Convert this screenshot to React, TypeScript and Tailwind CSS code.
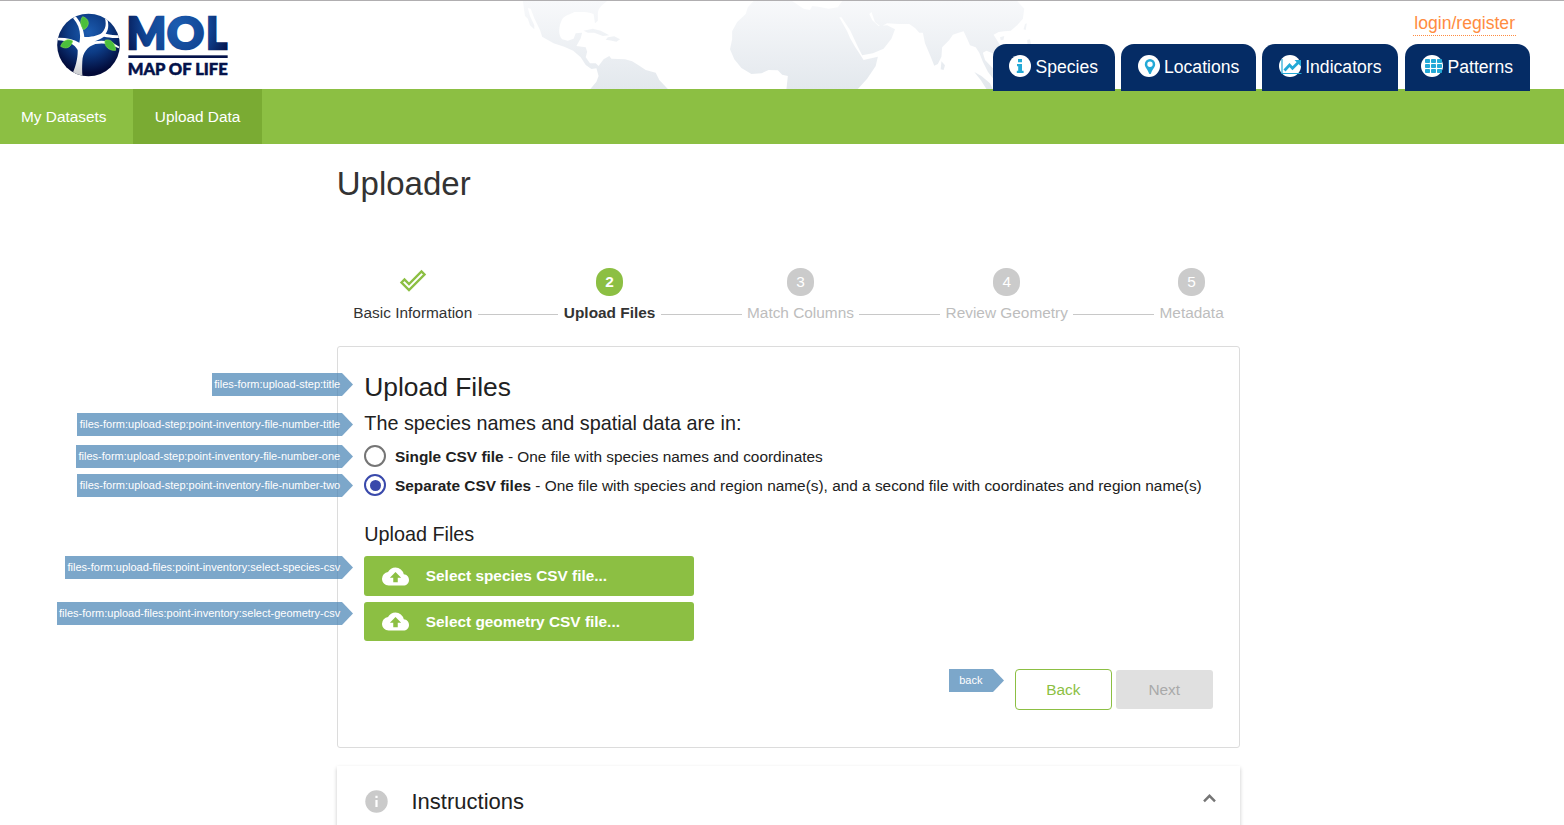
import React from "react";

const ARIAL = "font-['Liberation_Sans',Arial,sans-serif]";

function Logo() {
  return (
    <svg className="block h-[90px] w-[210px]" viewBox="0 0 630 270">
      <defs>
        <radialGradient id="globe" cx="0.5" cy="0.3" r="0.65">
          <stop offset="0" stopColor="#1c5cb0" />
          <stop offset="0.5" stopColor="#0d3c86" />
          <stop offset="1" stopColor="#020a38" />
        </radialGradient>
        <radialGradient id="word" gradientUnits="userSpaceOnUse" cx="410" cy="75" r="170">
          <stop offset="0" stopColor="#1c5cb0" />
          <stop offset="0.6" stopColor="#104391" />
          <stop offset="1" stopColor="#04124a" />
        </radialGradient>
        <linearGradient id="trunk" x1="0" y1="0" x2="0" y2="1">
          <stop offset="0.6" stopColor="#fff" />
          <stop offset="1" stopColor="#c4c6ca" />
        </linearGradient>
        <clipPath id="disc">
          <circle cx="145.500" cy="135" r="94" />
        </clipPath>
      </defs>
      <circle cx="145.500" cy="135" r="94" fill="url(#globe)" />
      <g clipPath="url(#disc)">
        <path
          d="M93 232C108 200 114 172 113 150C104 133 80 120 50 121L50 113C78 112 100 117 118 128C124 100 118 76 99 54L107 49C122 66 130 86 133 111C150 111 174 108 186 98C199 86 199 68 194 52L201 54C207 74 206 90 197 101C211 104 225 106 240 106L240 113C222 116 206 112 192 110C180 118 170 121 163 124C184 120 204 122 218 128L238 140L236 145C212 131 190 128 166 132C142 140 128 158 127 184C126 204 126 218 128 232Z"
          fill="url(#trunk)"
        />
      </g>
      <g fill="#4bbf3c" stroke="#7fdc45" strokeWidth="2">
        <path d="M128 50C149 56 151 78 131 89C120 76 120 60 128 50Z" />
        <path d="M62 139C68 120 86 115 98 123C93 143 78 149 62 139Z" />
        <path d="M195 121C212 115 226 130 227 151C208 153 192 140 195 121Z" />
      </g>
      <text
        y="146"
        fontSize="130"
        fontWeight="900"
        fill="url(#word)"
        stroke="url(#word)"
        strokeWidth="8"
        className="font-['Lato',sans-serif]"
      >
        <tspan x="260" textLength="118" lengthAdjust="spacingAndGlyphs">M</tspan>
        <tspan x="381" textLength="111" lengthAdjust="spacingAndGlyphs">O</tspan>
        <tspan x="499" textLength="62" lengthAdjust="spacingAndGlyphs">L</tspan>
      </text>
      <rect x="265" y="166" width="298" height="8" fill="#04124a" />
      <text
        x="263"
        y="224"
        textLength="300"
        lengthAdjust="spacingAndGlyphs"
        fontSize="48"
        fontWeight="900"
        fill="#04124a"
        stroke="#04124a"
        strokeWidth="1.500"
        className="font-['Lato',sans-serif]"
      >
        MAP OF LIFE
      </text>
    </svg>
  );
}

function WorldMap() {
  return (
    <svg
      className="absolute left-[500px] top-0 h-[88px] w-[560px]"
      viewBox="0 3 1568 264"
      preserveAspectRatio="none"
    >
      <defs>
        <linearGradient id="land" gradientUnits="userSpaceOnUse" x1="0" y1="0" x2="0" y2="267">
          <stop offset="0" stopColor="#f8f9fb" />
          <stop offset="1" stopColor="#e3e8ed" />
        </linearGradient>
      </defs>
      <g fill="url(#land)">
        <path d="M64 3L300 3C285 15 275 25 274 40L274 62L266 70L262 42C245 34 225 36 208 36C195 45 180 46 174 58C164 80 162 105 174 118L190 122L206 116L212 100L230 98L226 115L214 138L240 142L244 155L240 172L252 190L268 190L276 198L290 178L306 168L312 176L330 177L350 178L370 184L388 196L408 210L436 218L446 240L470 267L253 267L270 245L276 228L270 205L256 207L240 195L226 172L205 152L180 140L150 130L118 110L112 90L96 55L86 26L78 24L84 48L96 76L96 88L84 76L78 56L70 48Z" />
        <path d="M234 92L260 86L282 92L306 106L288 108L264 98L246 98Z" />
        <path d="M302 112L320 109L336 118L326 125L306 121L296 119Z" />
        <path d="M710 3L818 3L850 26L868 30L874 18L892 20L920 26L946 22L958 3L1448 3L1468 26L1464 56L1448 76L1430 92L1412 94L1396 96L1382 104L1390 118L1400 135L1398 158L1380 160L1362 152L1352 158L1358 180L1380 205L1380 235L1366 215L1352 185L1342 158L1332 142L1316 136L1308 116L1298 94L1284 98L1268 104L1258 120L1238 142L1236 170L1226 192L1216 197L1206 170L1190 130L1184 98L1174 98L1162 84L1146 72L1116 72L1084 70L1066 80L1050 66L1040 36L1034 42L1042 60L1060 78L1084 76L1106 88L1096 116L1074 146L1044 160L1014 166L1002 140L980 90L956 52L950 52L972 94L980 114L994 140L1006 160L1018 180L1058 170L1052 198L1028 236L1002 267L802 267L806 228L790 224L778 211L752 210L732 220L704 222L676 204L656 178L644 148L650 118L650 94L664 66L688 42L694 22Z" />
        <path d="M1236 184L1246 196L1242 210L1234 208Z" />
        <path d="M1400 112L1412 108L1410 119L1402 121Z" />
        <path d="M1470 72L1475 70L1472 90L1466 88Z" />
        <path d="M1476 120L1484 118L1488 140L1478 142Z" />
        <path d="M1328 216L1348 228L1372 250L1380 267L1362 267L1346 240Z" />
      </g>
    </svg>
  );
}

function TabIcon({ kind }: { kind: string }) {
  return (
    <svg className="mr-[3.500px] block h-[22px] w-[23px] shrink-0" viewBox="0 0 23 22">
      <circle cx="11" cy="11" r="11" fill="#fff" />
      {kind === "info" && (
        <path d="M9 4h4v3.2H9zM8 9h5v6.8h1.6V18H7.8v-2.2h1.4v-4.6H8z" fill="#23a9d6" />
      )}
      {kind === "pin" && (
        <path
          fillRule="evenodd"
          d="M12 4a5.2 5.2 0 0 0-5.2 5.2c0 3.4 3 4.800 4.200 9.300q1 1.200 2 0C14.200 14 17.200 12.600 17.200 9.200A5.200 5.200 0 0 0 12 4zm0 2.600a2.700 2.700 0 1 1 0 5.400a2.700 2.700 0 0 1 0-5.400z"
          fill="#23a9d6"
        />
      )}
      {kind === "chart" && (
        <g fill="none" stroke="#23a9d6">
          <path d="M3 4v14.500h19.500" strokeWidth="1.200" />
          <path d="M5.500 15.500l5-5.500 3 3.300 6-6" strokeWidth="2.800" />
          <path d="M15.500 5h6.500v6.500z" fill="#23a9d6" stroke="none" />
        </g>
      )}
      {kind === "grid" && (
        <g fill="#23a9d6">
          {[4, 10, 16].map((x) =>
            [4, 9, 14].map((y) => <rect key={`${x}-${y}`} x={x} y={y} width="5" height="4" rx="0.8" />)
          )}
        </g>
      )}
    </svg>
  );
}

function Tab({ kind, label, className }: { kind: string; label: string; className: string }) {
  return (
    <a
      className={`flex h-[47px] items-start rounded-t-[13px] bg-[#052c65] pt-[11px] text-[17.6px] leading-6 text-white ${className}`}
    >
      <TabIcon kind={kind} />
      {label}
    </a>
  );
}

function Tag({ text, className }: { text: string; className: string }) {
  return (
    <div className={`absolute right-full mr-[11px] flex opacity-70 ${className}`}>
      <span className="flex h-[23px] items-center whitespace-nowrap bg-[#4682b4] pb-px text-[11px] leading-none text-white">
        <span className="pl-[2.400px] pr-[1.800px]">{text}</span>
      </span>
      <svg className="block h-[23px] w-[11px]" viewBox="0 0 11 23">
        <path d="M0 0L11 11.500L0 23Z" fill="#4682b4" />
      </svg>
    </div>
  );
}

function Step({ n, label, active, done }: { n: number; label: string; active?: boolean; done?: boolean }) {
  return (
    <div className="flex shrink-0 flex-col items-center">
      {done ? (
        <svg className="block h-7 w-7" viewBox="0 0 28 28">
          <path
            d="M2.500 14.500L5.500 11.500L10 16L22.500 3.500L25.500 6.500L10 22Z"
            fill="none"
            stroke="#8cbf43"
            strokeWidth="2.400"
          />
        </svg>
      ) : (
        <div
          className={`flex h-7 w-[27px] items-center justify-center rounded-[13px] text-[15.400px] text-white ${
            active ? "bg-[#8cbf43] font-bold" : "bg-[#cbcbcb]"
          }`}
        >
          {n}
        </div>
      )}
      <div
        className={`mt-1.5 whitespace-nowrap text-[15.400px] leading-[22px] ${
          active ? "font-bold text-[#333]" : done ? "text-[#333]" : "text-[#bdbdbd]"
        }`}
      >
        {label}
      </div>
    </div>
  );
}

function Line() {
  return <div className="mx-[5.500px] mt-[46px] h-px flex-1 bg-[#c8c8c8]" />;
}

function Radio({ on }: { on?: boolean }) {
  return (
    <span
      className={`mr-[9px] flex size-[22px] shrink-0 items-center justify-center rounded-full border-2 ${
        on ? "border-[#3949ab]" : "border-[#757575]"
      }`}
    >
      {on && <span className="size-[11px] rounded-full bg-[#3949ab]" />}
    </span>
  );
}

function UploadButton({ label, className }: { label: string; className: string }) {
  return (
    <button
      className={`flex w-[330px] items-center rounded-[3px] bg-[#8cbf43] pl-[17.700px] text-[15.400px] font-bold text-white ${className}`}
    >
      <svg className="mr-[17.100px] block h-[27px] w-[27px]" viewBox="0 0 24 24">
        <path
          fill="#fff"
          d="M19.350 10.040A7.490 7.490 0 0 0 12 4C9.110 4 6.600 5.640 5.350 8.040A5.994 5.994 0 0 0 0 14c0 3.310 2.690 6 6 6h13c2.760 0 5-2.240 5-5 0-2.640-2.050-4.780-4.650-4.960zM14 13v4h-4v-4H7l5-5 5 5h-3z"
        />
      </svg>
      {label}
    </button>
  );
}

export default function App() {
  return (
    <div className={`h-[825px] w-full overflow-hidden bg-white text-[#212121] ${ARIAL}`}>
      <header className="relative flex h-[89px] justify-between border-t border-[#b0aeb0] pl-10 pr-[34px]">
        <WorldMap />
        <div className="relative -mt-px">
          <Logo />
        </div>
        <div className="relative z-10 flex flex-col items-end">
          <a className="mr-[14px] mt-[11px] h-6 border-b border-dotted border-[#ff8c40] px-px text-[17.600px] leading-[23px] text-[#ff8c40]">
            login/register
          </a>
          <nav className="mt-2 flex">
            <Tab kind="info" label="Species" className="mr-1.5 w-[122px] pl-4" />
            <Tab kind="pin" label="Locations" className="mr-1.5 w-[135px] pl-[16.500px]" />
            <Tab kind="chart" label="Indicators" className="mr-[7px] w-[136px] pl-[16.700px]" />
            <Tab kind="grid" label="Patterns" className="w-[125px] pl-4" />
          </nav>
        </div>
      </header>

      <nav className="flex h-[55px] bg-[#8cbf43] text-[15.400px] text-white">
        <a className="flex w-[133px] items-center pl-[21px]">My Datasets</a>
        <a className="flex w-[129px] items-center bg-[#7aab33] pl-[21.800px]">Upload Data</a>
      </nav>

      <main className="ml-[337px] w-[903px]">
        <h1 className="-ml-[0.300px] pt-[19px] text-[33px] leading-[42px] text-[#333]">Uploader</h1>

        <div className="mt-[63px] flex h-[78px] items-start pl-[16.300px] pr-[16.300px]">
          <Step n={1} label="Basic Information" done />
          <Line />
          <Step n={2} label="Upload Files" active />
          <Line />
          <Step n={3} label="Match Columns" />
          <Line />
          <Step n={4} label="Review Geometry" />
          <Line />
          <Step n={5} label="Metadata" />
        </div>

        <section className="h-[402px] rounded-[3px] border border-[#dcdcdc] px-[26px] pt-[22px]">
          <div className="relative">
            <h2 className="pl-[0.200px] text-[26.400px] leading-9">Upload Files</h2>
            <Tag text="files-form:upload-step:title" className="top-1" />
          </div>
          <div className="relative">
            <h3 className="pl-[0.300px] text-[19.800px] leading-9">The species names and spatial data are in:</h3>
            <Tag text="files-form:upload-step:point-inventory-file-number-title" className="top-2" />
          </div>
          <div className="relative flex h-[30px] items-center text-[15.400px]">
            <Radio />
            <span className="pt-[2px]">
              <b>Single CSV file</b> - One file with species names and coordinates
            </span>
            <Tag text="files-form:upload-step:point-inventory-file-number-one" className="top-1" />
          </div>
          <div className="relative flex h-7 items-center text-[15.400px]">
            <Radio on />
            <span className="whitespace-nowrap pt-[2px]">
              <b>Separate CSV files</b> - One file with species and region name(s), and a second file with
              coordinates and region name(s)
            </span>
            <Tag text="files-form:upload-step:point-inventory-file-number-two" className="top-[3px]" />
          </div>
          <h3 className="mt-[19px] pl-[0.300px] text-[19.800px] leading-8">Upload Files</h3>
          <div className="relative mt-[6px]">
            <UploadButton label="Select species CSV file..." className="h-10" />
            <Tag text="files-form:upload-files:point-inventory:select-species-csv" className="top-0" />
          </div>
          <div className="relative mt-[6px]">
            <UploadButton label="Select geometry CSV file..." className="h-[39px]" />
            <Tag text="files-form:upload-files:point-inventory:select-geometry-csv" className="top-0" />
          </div>
          <div className="mt-7 flex items-center justify-end gap-1 text-[15.400px]">
            <div className="relative">
              <button className="block h-[41px] w-[97px] rounded-[4px] border border-[#8cbf43] pr-[0.200px] text-[#8cbf43]">
                Back
              </button>
              <div className="absolute right-full top-0 mr-[11px] flex opacity-70">
                <span className="flex h-[23px] w-11 items-center justify-center bg-[#4682b4] pb-px pr-[0.300px] text-[11px] text-white">
                  back
                </span>
                <svg className="block h-[23px] w-[11px]" viewBox="0 0 11 23">
                  <path d="M0 0L11 11.500L0 23Z" fill="#4682b4" />
                </svg>
              </div>
            </div>
            <button className="h-[39px] w-[97px] rounded-[3px] bg-[#e0e0e0] pr-[0.600px] text-[#a9a9a9]">Next</button>
          </div>
        </section>

        <section className="mt-[18px] flex h-[90px] items-start bg-white pl-7 shadow-[0_2px_4px_rgba(0,0,0,0.220)]">
          <svg className="mt-[23.500px] block size-[23px]" viewBox="0 0 23 23">
            <circle cx="11.500" cy="11.500" r="11.200" fill="#cacaca" />
            <path d="M10.400 5.700h2.200V8h-2.200zM10.400 10h2.200v7h-2.200z" fill="#fff" />
          </svg>
          <h3 className="ml-[23.500px] mt-5 text-[22px] leading-8">Instructions</h3>
          <svg className="ml-auto mr-6 mt-[27px] block h-[10px] w-[13px]" viewBox="0 0 13 10">
            <path d="M1 8.300L6.500 2.800L12 8.300" fill="none" stroke="#757575" strokeWidth="2.400" />
          </svg>
        </section>
      </main>
    </div>
  );
}
